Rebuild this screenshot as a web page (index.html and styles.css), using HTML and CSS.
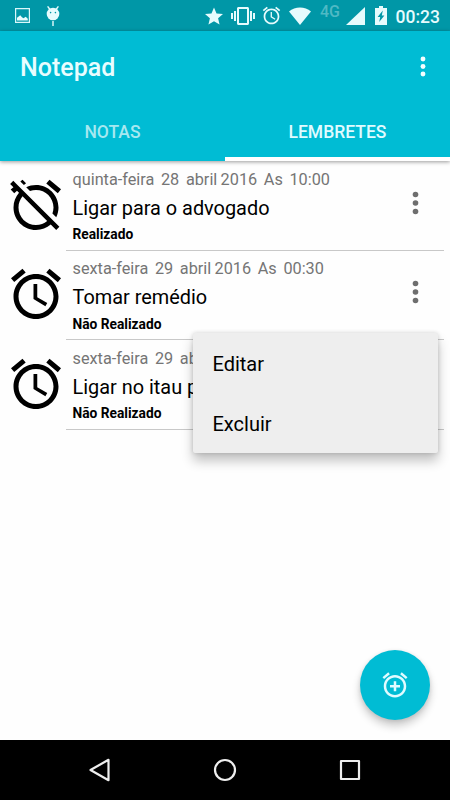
FILE: index.html
```html
<!DOCTYPE html>
<html lang="pt-BR">
<head>
  <meta charset="UTF-8" />
  <meta name="viewport" content="width=device-width, initial-scale=1.0"/>
  <title>Notepad</title>
  <link rel="stylesheet" href="styles.css">
</head>
<body>
  <svg class="defs" width="0" height="0">
    <symbol id="alarm" viewBox="0 0 24 24">
      <path d="M22 5.72l-4.6-3.86-1.29 1.53 4.6 3.86L22 5.72zM7.88 3.39L6.6 1.86 2 5.71l1.29 1.53 4.59-3.85zM12.5 8H11v6l4.75 2.85.75-1.23-4-2.37V8zM12 4c-4.97 0-9 4.03-9 9s4.02 9 9 9c4.97 0 9-4.03 9-9s-4.03-9-9-9zm0 16c-3.87 0-7-3.13-7-7s3.13-7 7-7 7 3.13 7 7-3.13 7-7 7z"/>
    </symbol>
    <symbol id="more" viewBox="0 0 6 24">
      <circle cx="3" cy="3.5" r="2.8"/><circle cx="3" cy="12" r="2.8"/><circle cx="3" cy="20.5" r="2.8"/>
    </symbol>
  </svg>

  <div class="statusbar">
    <svg class="picture" width="15" height="15" viewBox="0 0 15 15"><path fill="none" stroke="#d9f7fa" stroke-width="1.2" d="M.6.6h13.8v13.8H.6z"/><path d="M2 12.5V9.8l2-1.6 1.2-1L7 9.2l1.5 1 2.2-1.4 2.1 2v1.7z"/></svg>
    <svg class="android" width="14" height="20" viewBox="0 0 14 20"><circle cx="7" cy="8" r="6.3"/><path d="M1.6.4l2.6 3.4M12.4.4L9.8 3.8M7 15V20" stroke="#e6fbfd" stroke-width="1.4"/><g fill="#0097a7"><circle cx="4.6" cy="6.6" r=".8"/><circle cx="9.4" cy="6.6" r=".8"/></g></svg>
    <svg class="star" width="18" height="18" viewBox="2 2 20 19"><path d="M12 17.27L18.18 21l-1.64-7.03L22 9.24l-7.19-.61L12 2 9.19 8.63 2 9.24l5.46 4.73L5.82 21z"/></svg>
    <svg class="vibrate" width="24" height="24" viewBox="0 0 24 24"><path d="M0 15h2V9H0v6zm3 2h2V7H3v10zm19-8v6h2V9h-2zm-3 8h2V7h-2v10zM16.5 3h-9C6.67 3 6 3.67 6 4.5v15c0 .83.67 1.5 1.5 1.5h9c.83 0 1.5-.67 1.5-1.5v-15c0-.83-.67-1.5-1.5-1.5zM16 19H8V5h8v14z"/></svg>
    <svg class="clock" width="21" height="21"><use href="#alarm"/></svg>
    <svg class="wifi" width="22" height="18" viewBox="0 0 22 18"><path d="M0 4.5C6-1 16-1 22 4.5L11 18z"/></svg>
    <span class="net">4G</span>
    <svg class="signal" width="19" height="18" viewBox="0 0 19 18"><path d="M19 0v18H0z"/></svg>
    <svg class="battery" width="12" height="19" viewBox="0 0 12 19"><path d="M4 0h4v2h4v17H0V2h4z"/><path fill="#0097a7" d="M7.8 4.5L2.6 11h2.6L4.2 16l5.2-6.5H6.8z"/></svg>
    <span class="time">00:23</span>
  </div>

  <header class="appbar">
    <div class="toolbar">
      <h1>Notepad</h1>
      <svg class="menu-icon" width="6" height="21"><use href="#more"/></svg>
    </div>
    <nav class="tabs">
      <div class="tab">NOTAS</div>
      <div class="tab active">LEMBRETES</div>
    </nav>
  </header>

  <main class="list">
    <div class="item">
      <svg class="item-icon" viewBox="0 0 24 24"><path d="M12 6c3.87 0 7 3.13 7 7 0 .84-.16 1.65-.43 2.4l1.52 1.52c.58-1.19.91-2.51.91-3.92 0-4.97-4.03-9-9-9-1.41 0-2.73.33-3.92.91L9.6 6.43C10.35 6.16 11.16 6 12 6zm10-.28l-4.6-3.86-1.29 1.53 4.6 3.86L22 5.72zM2.92 2.29L1.65 3.57 2.98 4.9l-1.11.93 1.42 1.42 1.11-.94.8.8C3.83 8.69 3 10.75 3 13c0 4.97 4.02 9 9 9 2.25 0 4.31-.83 5.89-2.2l2.2 2.2 1.27-1.27L3.89 3.27l-.97-.98zm13.55 16.1C15.26 19.39 13.7 20 12 20c-3.87 0-7-3.13-7-7 0-1.7.61-3.26 1.61-4.47l9.86 9.86zM8.02 3.28L6.6 1.86l-.86.71 1.42 1.42.86-.71z"/></svg>
      <div class="item-body">
        <p class="date">quinta-feira&nbsp; 28&nbsp; abril 2016&nbsp; As&nbsp; 10:00</p>
        <h2>Ligar para o advogado</h2>
        <p class="state">Realizado</p>
        <svg class="item-more" width="7" height="24"><use href="#more"/></svg>
      </div>
    </div>
    <div class="item">
      <svg class="item-icon"><use href="#alarm"/></svg>
      <div class="item-body">
        <p class="date">sexta-feira&nbsp; 29&nbsp; abril 2016&nbsp; As&nbsp; 00:30</p>
        <h2>Tomar remédio</h2>
        <p class="state">Não Realizado</p>
        <svg class="item-more" width="7" height="24"><use href="#more"/></svg>
        <div class="popup">
          <div class="option">Editar</div>
          <div class="option">Excluir</div>
        </div>
      </div>
    </div>
    <div class="item">
      <svg class="item-icon"><use href="#alarm"/></svg>
      <div class="item-body">
        <p class="date">sexta-feira&nbsp; 29&nbsp; ab</p>
        <h2>Ligar no itau p</h2>
        <p class="state">Não Realizado</p>
      </div>
    </div>

    <div class="fab">
      <svg width="30" height="30" viewBox="0 0 24 24"><path d="M7.88 3.39L6.6 1.86 2 5.71l1.29 1.53 4.59-3.85zM22 5.72l-4.6-3.86-1.29 1.53 4.6 3.86L22 5.72zM12 4c-4.97 0-9 4.03-9 9s4.02 9 9 9c4.97 0 9-4.03 9-9s-4.03-9-9-9zm0 16c-3.87 0-7-3.13-7-7s3.13-7 7-7 7 3.13 7 7-3.13 7-7 7zm1-11h-2v3H8v2h3v3h2v-3h3v-2h-3V9z"/></svg>
    </div>
  </main>

  <footer class="navbar">
    <svg width="24" height="26" viewBox="0 0 24 26"><path d="M20.5 2.8v20.4L2.5 13z"/></svg>
    <svg width="24" height="26" viewBox="0 0 24 26"><circle cx="12" cy="13" r="10"/></svg>
    <svg width="24" height="26" viewBox="0 0 24 26"><path d="M3 4h18v18H3z"/></svg>
  </footer>
</body>
</html>
```
FILE: styles.css
```css
* {
  box-sizing: border-box;
}

body {
  margin: 0;
  width: 450px;
  height: 800px;
  display: flex;
  flex-direction: column;
  overflow: hidden;
  font-family: Roboto, sans-serif;
  background: #fefefe;
  color: #000;
}

h1, h2, p {
  margin: 0;
}

svg {
  display: block;
  flex-shrink: 0;
}

.defs {
  position: absolute;
}

.statusbar {
  height: 31px;
  display: flex;
  align-items: center;
  padding: 0 10px 0 15px;
  background: #0097a7;
  color: #e6fbfd;
  fill: #e6fbfd;
}

.android {
  margin-left: 16px;
}

.star {
  margin-left: 145px;
}

.vibrate {
  margin-left: 8px;
}

.clock {
  margin-left: 6px;
}

.wifi {
  margin: 1px 0 0 7px;
}

.net {
  width: 21px;
  margin: 0 0 8px 9px;
  font-size: 16px;
  font-weight: 500;
  color: #4fb9c4;
}

.signal {
  margin: 1px 0 0 5px;
}

.battery {
  margin-left: 10px;
}

.time {
  margin: 2px 0 0 auto;
  font-size: 17.5px;
  font-weight: 500;
}

.appbar {
  height: 130px;
  display: flex;
  flex-direction: column;
  background: #00bcd4;
  box-shadow: 0 1px 4px rgba(0,0,0,0.4);
  z-index: 1;
}

.toolbar {
  height: 72px;
  display: flex;
  align-items: center;
  justify-content: space-between;
  padding: 0 24px 0 20px;
  color: #e8fdff;
  fill: #f4feff;
}

.toolbar h1 {
  padding-top: 1px;
  font-size: 25px;
  font-weight: 500;
}

.menu-icon {
  margin-bottom: 1px;
}

.tabs {
  flex: 1;
  display: flex;
}

.tab {
  flex: 1;
  padding-top: 4px;
  line-height: 50px;
  text-align: center;
  font-size: 17.5px;
  font-weight: 500;
  color: #a6e8f0;
}

.tab.active {
  color: #e0fbff;
  border-bottom: 4px solid #fff;
}

.list {
  flex: 1;
  position: relative;
  padding-top: 0.7px;
}

.item {
  height: 89.35px;
  display: flex;
}

.item-icon {
  width: 60px;
  height: 60px;
  margin: 13.3px 0 0 6px;
}

.item-body {
  flex: 1;
  position: relative;
  margin-right: 6px;
  padding: 7.3px 0 0 6.5px;
  border-bottom: 1px solid #c8c8c8;
}

.date {
  font-size: 16.25px;
  line-height: 21px;
  word-spacing: -0.7px;
  color: #757575;
}

.item h2 {
  margin-top: 6px;
  font-size: 19.9px;
  line-height: 26px;
  font-weight: 400;
}

.state {
  margin-top: 3.5px;
  font-size: 13.75px;
  line-height: 18px;
  font-weight: 700;
}

.item-more {
  position: absolute;
  right: 25px;
  top: 29px;
  fill: #6e6e6e;
}

.popup {
  position: absolute;
  right: 6.5px;
  top: 82px;
  width: 245px;
  height: 120px;
  background: #eee;
  border-radius: 2px;
  box-shadow: 0 8px 12px rgba(0,0,0,0.24), 0 0 4px rgba(0,0,0,0.16);
  z-index: 2;
}

.option {
  padding-left: 20px;
  font-size: 20px;
  line-height: 60px;
}

.option:first-child {
  padding-top: 0.5px;
}

.fab {
  position: absolute;
  right: 20px;
  bottom: 20px;
  width: 70px;
  height: 70px;
  display: flex;
  align-items: center;
  justify-content: center;
  border-radius: 50%;
  background: #00bcd4;
  fill: #e0fbff;
  box-shadow: 0 6px 9px rgba(0,0,0,0.2), 0 1px 4px rgba(0,0,0,0.1);
}

.navbar {
  height: 60px;
  display: flex;
  align-items: center;
  justify-content: space-between;
  padding: 0 88px;
  background: #000;
  fill: none;
  stroke: #eee;
  stroke-width: 2.2;
  stroke-linejoin: round;
}
```
